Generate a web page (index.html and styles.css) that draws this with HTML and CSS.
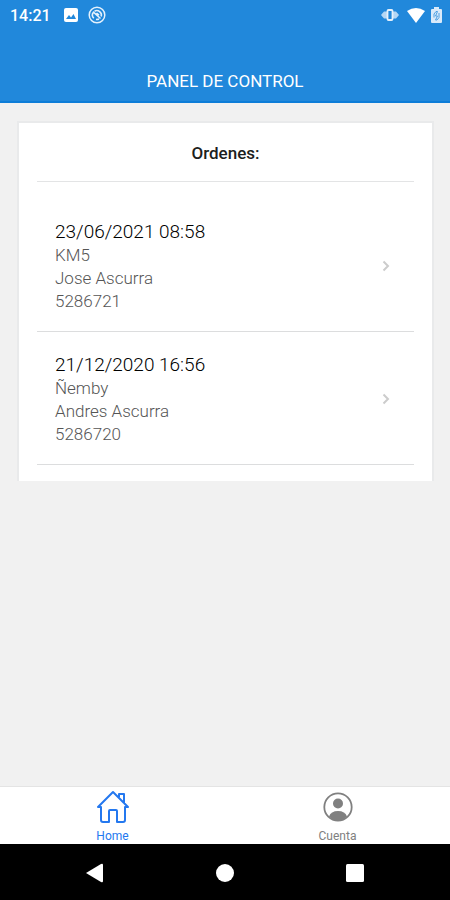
FILE: index.html
```html
<!DOCTYPE html>
<html lang="es">
<head>
<meta charset="utf-8">
<meta name="viewport" content="width=device-width, initial-scale=1">
<title>Panel de control</title>
<link rel="stylesheet" href="styles.css">
</head>
<body>
<div class="app">
  <header class="header">
    <div class="status">
      <span class="clock">14:21</span>
      <svg class="icon-photo" width="14" height="14" viewBox="0 0 14 14" aria-hidden="true"><rect width="14" height="14" rx="2" fill="#fff"/><path d="M2 11l3-4 2 2.500L9.500 6 12 11z" fill="#2188db"/></svg>
      <svg class="icon-sync" width="18" height="18" viewBox="0 0 18 18" fill="none" stroke="#e4f1fc" aria-hidden="true"><circle cx="9" cy="9" r="7.800" stroke-width="1.500"/><path d="M5.800 12.200A4.500 4.500 0 0 1 5.500 6.200L12.500 12.500M6.500 5.200A4.600 4.600 0 0 1 13.200 10.500M8 13.400Q9.500 13.700 11 13M8.500 7L11 9.200" stroke-width="1.600"/></svg>
      <svg class="icon-vibrate" width="18" height="14" viewBox="0 0 18 14" aria-hidden="true"><path d="M0 7l3-3.500h3v7H3zM18 7l-3-3.500h-3v7h3z" fill="#b5d7f4"/><rect x="6.500" y="2" width="5" height="10" rx="1" fill="#2188db" stroke="#e5f1fc" stroke-width="1.800"/></svg>
      <svg class="icon-wifi" width="18" height="15" viewBox="0 0 18 15" aria-hidden="true"><path d="M0 3Q9-3 18 3L9 15z" fill="#fff"/></svg>
      <svg width="11" height="16" viewBox="0 0 11 16" aria-hidden="true"><path d="M1 2h2V0h5v2h2q1 0 1 1v12q0 1-1 1H1q-1 0-1-1V3q0-1 1-1z" fill="#d9eafa"/><path d="M3 10.500V7L5 4.500h1.500M8 6v4.500L6 13H4.500M6.500 4.500l-2 4.500h2L4.500 13" fill="none" stroke="#4c9fe2" stroke-width="1"/></svg>
    </div>
    <h1 class="title">PANEL DE CONTROL</h1>
  </header>
  <main class="content">
    <section class="card">
      <h2 class="card-title">Ordenes:</h2>
      <ul class="orders">
        <li><a class="order" href="#orden-5286721">
          <span class="details"><span class="date">23/06/2021 08:58</span><span>KM5</span><span>Jose Ascurra</span><span>5286721</span></span>
          <svg width="8" height="12" viewBox="0 0 8 12" aria-hidden="true"><path d="M1.500 1.500L6 6l-4.500 4.500" class="chevron"/></svg>
        </a></li>
        <li><a class="order" href="#orden-5286720">
          <span class="details"><span class="date">21/12/2020 16:56</span><span>Ñemby</span><span>Andres Ascurra</span><span>5286720</span></span>
          <svg width="8" height="12" viewBox="0 0 8 12" aria-hidden="true"><path d="M1.500 1.500L6 6l-4.500 4.500" class="chevron"/></svg>
        </a></li>
      </ul>
    </section>
  </main>
  <nav class="tabs">
    <a class="tab active" href="#home">
      <svg width="34" height="34" viewBox="0 0 34 34" fill="none" stroke="currentColor" stroke-width="2" stroke-linejoin="round" stroke-linecap="round" aria-hidden="true"><path d="M2 17L17 2l15 15h-3v13q0 2-2 2h-6V21q0-1-1-1h-6q-1 0-1 1v11H7q-2 0-2-2V17zM23 7V4h5v9"/></svg>
      <span>Home</span>
    </a>
    <a class="tab" href="#cuenta">
      <svg width="34" height="34" viewBox="0 0 34 34" aria-hidden="true"><circle cx="17" cy="17" r="13.700" fill="none" stroke="currentColor" stroke-width="1.800"/><circle cx="17" cy="13.500" r="5" fill="currentColor"/><path d="M8 26.500Q10 21 17 21t9 5.500Q22 31 17 31t-9-4.500z" fill="currentColor"/></svg>
      <span>Cuenta</span>
    </a>
  </nav>
  <div class="system">
    <button class="key" type="button" aria-label="Atrás"><svg width="20" height="20" viewBox="0 0 20 20"><path d="M1 10L16 1q2-1 2 1v16q0 2-2 1z" fill="#fff"/></svg></button>
    <button class="key" type="button" aria-label="Inicio"><svg width="20" height="20" viewBox="0 0 20 20"><circle cx="10" cy="10" r="9" fill="#fff"/></svg></button>
    <button class="key" type="button" aria-label="Recientes"><svg width="20" height="20" viewBox="0 0 20 20"><rect x="1" y="1" width="18" height="18" rx="1.500" fill="#fff"/></svg></button>
  </div>
</div>
</body>
</html>
```
FILE: styles.css
```css
* {
  box-sizing: border-box;
}

body {
  margin: 0;
  font-family: Roboto, "Liberation Sans", sans-serif;
  background: #f1f1f1;
}

svg {
  display: block;
  flex: none;
}

.app {
  display: flex;
  flex-direction: column;
  min-height: 100vh;
}

.header {
  background: #2188db;
  border-bottom: 2px solid #0d7dd8;
  color: #fff;
  padding-bottom: 8px;
}

.status {
  display: flex;
  align-items: center;
  height: 30px;
  padding: 0 8px 0 10px;
}

.clock {
  font-size: 16px;
  font-weight: 500;
}

.icon-photo {
  margin-left: 13px;
}

.icon-sync {
  margin-left: 10px;
}

.icon-vibrate {
  margin-left: auto;
}

.icon-wifi {
  margin: 0 6px 0 8px;
}

.title {
  margin: 0;
  padding-top: 40px;
  font-size: 17px;
  font-weight: 400;
  line-height: 23px;
  text-align: center;
}

.content {
  flex: 1;
  padding: 18px 16px 18px 17px;
}

.card {
  background: #fff;
  border: 2px solid #e9eaeb;
  border-bottom: 0;
  padding: 18px 18px 16px;
}

.card-title {
  margin: 0 0 17px;
  padding-bottom: 16px;
  border-bottom: 1px solid #e3e4e5;
  font-size: 17px;
  font-weight: 500;
  line-height: 24px;
  text-align: center;
  color: #1c1e20;
}

.orders {
  list-style: none;
  margin: 0;
  padding: 0;
}

.order {
  display: flex;
  align-items: center;
  justify-content: space-between;
  padding: 20px 24px 18px 18px;
  border-bottom: 1px solid #dcddde;
  text-decoration: none;
}

.details {
  display: flex;
  flex-direction: column;
  font-size: 17px;
  font-weight: 300;
  line-height: 23px;
  color: #555;
}

.date {
  font-size: 19px;
  line-height: 25px;
  color: #000;
}

.chevron {
  fill: none;
  stroke: #ccc;
  stroke-width: 2;
}

.tabs {
  display: grid;
  grid-template-columns: 1fr 1fr;
  background: #fff;
  border-top: 1px solid #e4e4e4;
}

.tab {
  display: flex;
  flex-direction: column;
  align-items: center;
  padding: 3px 0 1px;
  gap: 5px;
  font-size: 12px;
  line-height: 14px;
  color: #808080;
  text-decoration: none;
}

.active {
  color: #2478ef;
}

.system {
  display: grid;
  grid-template-columns: repeat(3, 1fr);
  height: 56px;
  padding: 2px 30px 0;
  background: #000;
}

.key {
  display: flex;
  align-items: center;
  justify-content: center;
  padding: 0;
  border: 0;
  background: none;
}
```
